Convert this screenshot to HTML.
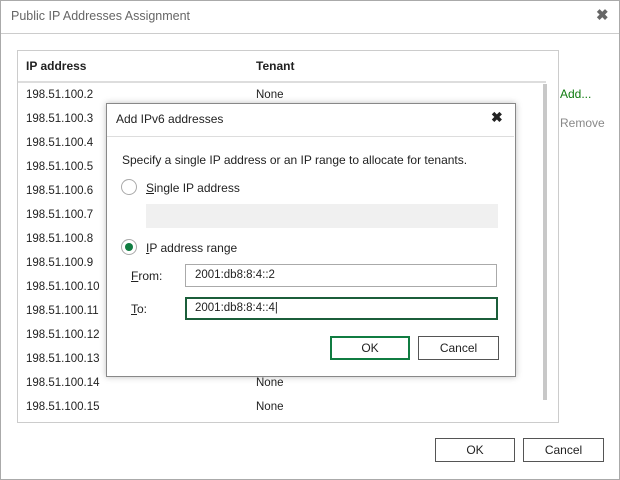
<html><head><style>
body{margin:0;width:620px;height:480px;position:relative;font-family:"Liberation Sans",sans-serif;font-size:12px;color:#222;background:#fff;overflow:hidden}
.a{position:absolute}
.btn{position:absolute;border:1px solid #555;background:#fff;text-align:center;line-height:22px;font-size:12px}
.row{position:absolute;left:26px;font-size:11.5px}
.ten{position:absolute;left:256px;font-size:11.5px}
u{text-decoration:underline}
</style></head><body>
<div class="a" style="left:0;top:0;width:618px;height:478px;border:1px solid #aaa"></div>
<div class="a" style="left:11px;top:9px;font-size:12.5px;color:#666">Public IP Addresses Assignment</div>
<div class="a" style="left:596px;top:6px;font-size:15px;color:#666;font-weight:bold">✖</div>
<div class="a" style="left:1px;top:33px;width:618px;height:1px;background:#ccc"></div>
<div class="a" style="left:17px;top:50px;width:540px;height:371px;border:1px solid #ccc"></div>
<div class="a" style="left:26px;top:59px;font-weight:bold;font-size:12px">IP address</div>
<div class="a" style="left:256px;top:59px;font-weight:bold;font-size:12px">Tenant</div>
<div class="a" style="left:18px;top:81px;width:528px;height:2px;background:#ddd"></div>
<div class="a" style="left:543px;top:84px;width:4px;height:316px;background:#c8c8c8"></div>
<div class="row" style="top:89px">198.51.100.2</div><div class="ten" style="top:89px">None</div>
<div class="row" style="top:113px">198.51.100.3</div>
<div class="row" style="top:137px">198.51.100.4</div>
<div class="row" style="top:161px">198.51.100.5</div>
<div class="row" style="top:185px">198.51.100.6</div>
<div class="row" style="top:209px">198.51.100.7</div>
<div class="row" style="top:233px">198.51.100.8</div>
<div class="row" style="top:257px">198.51.100.9</div>
<div class="row" style="top:281px">198.51.100.10</div>
<div class="row" style="top:305px">198.51.100.11</div>
<div class="row" style="top:329px">198.51.100.12</div>
<div class="row" style="top:353px">198.51.100.13</div>
<div class="row" style="top:377px">198.51.100.14</div><div class="ten" style="top:377px">None</div>
<div class="row" style="top:401px">198.51.100.15</div><div class="ten" style="top:401px">None</div>
<div class="a" style="left:560px;top:87px;color:#107c10">Add...</div>
<div class="a" style="left:560px;top:116px;color:#888">Remove</div>
<div class="btn" style="left:435px;top:438px;width:78px">OK</div>
<div class="btn" style="left:523px;top:438px;width:79px">Cancel</div>

<div class="a" style="left:106px;top:103px;width:408px;height:272px;border:1px solid #888;background:#fff;box-shadow:0 0 6px rgba(0,0,0,.25)"></div>
<div class="a" style="left:116px;top:112px;font-size:12px">Add IPv6 addresses</div>
<div class="a" style="left:491px;top:109px;font-size:14px;font-weight:bold">✖</div>
<div class="a" style="left:107px;top:136px;width:407px;height:1px;background:#ddd"></div>
<div class="a" style="left:122px;top:153px">Specify a single IP address or an IP range to allocate for tenants.</div>
<div class="a" style="left:121px;top:179px;width:16px;height:16px;border:1px solid #aaa;border-radius:50%;box-sizing:border-box"></div>
<div class="a" style="left:146px;top:181px"><u>S</u>ingle IP address</div>
<div class="a" style="left:146px;top:204px;width:352px;height:24px;background:#f0f0f0"></div>
<div class="a" style="left:121px;top:239px;width:16px;height:16px;border:1px solid #aaa;border-radius:50%;box-sizing:border-box"></div>
<div class="a" style="left:125px;top:243px;width:8px;height:8px;background:#107c41;border-radius:50%"></div>
<div class="a" style="left:146px;top:241px"><u>I</u>P address range</div>
<div class="a" style="left:131px;top:269px"><u>F</u>rom:</div>
<div class="a" style="left:185px;top:264px;width:312px;height:23px;border:1px solid #aaa;box-sizing:border-box;padding:4px 9px;font-size:11.5px">2001:db8:8:4::2</div>
<div class="a" style="left:131px;top:302px"><u>T</u>o:</div>
<div class="a" style="left:185px;top:297px;width:313px;height:23px;border:2px solid #1b5e3a;box-sizing:border-box;padding:3px 8px;font-size:11.5px">2001:db8:8:4::4|</div>
<div class="btn" style="left:330px;top:336px;width:76px;border:2px solid #107c41;line-height:20px">OK</div>
<div class="btn" style="left:418px;top:336px;width:79px">Cancel</div>
</body></html>
